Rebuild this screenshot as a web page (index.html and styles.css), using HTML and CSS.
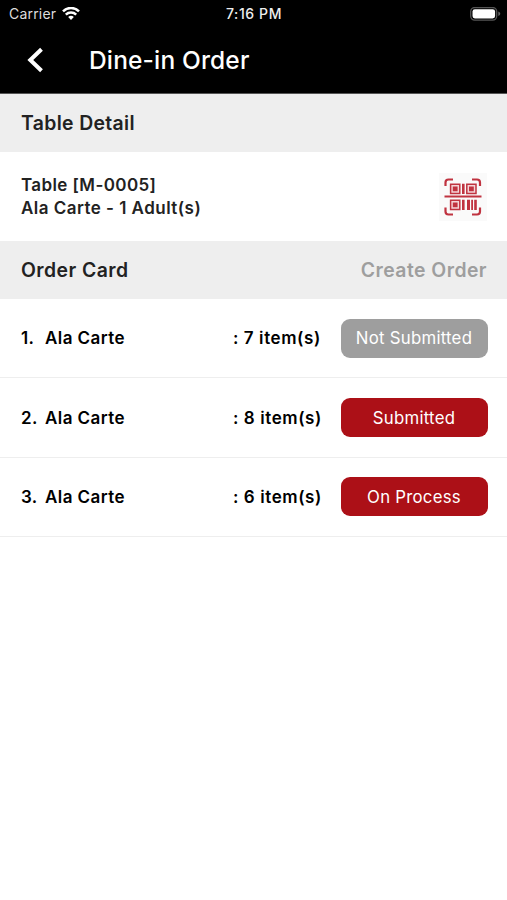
FILE: index.html
```html
<!DOCTYPE html>
<html lang="en">
<head>
<meta charset="utf-8">
<title>Dine-in Order</title>
<link rel="stylesheet" href="styles.css">
</head>
<body>
<header class="top">
  <div class="status">
    <div class="status-left">
      <span class="carrier">Carrier</span>
      <svg class="wifi" width="18" height="14" viewBox="0 0 18 14" fill="none" stroke="#fff" stroke-width="2.5">
        <path d="M1 4.300C5.400-.1 12.600-.1 17 4.300M3.800 7.600c2.900-2.700 7.500-2.700 10.400 0"/>
        <path d="M6.200 9.900c1.600-1.400 4-1.400 5.600 0L9 12.900z" fill="#fff" stroke="none"/>
      </svg>
    </div>
    <span class="time">7:16 PM</span>
    <svg class="battery" width="31" height="14" viewBox="0 0 31 14">
      <rect x=".7" y=".5" width="26" height="12.6" rx="4" fill="none" stroke="#555" stroke-width="1.3"/>
      <rect x="2.5" y="2.2" width="22.600" height="9.200" rx="2.400" fill="#fff"/>
      <path d="M28.300 4.600c2.600.8 2.600 3.600 0 4.400z" fill="#666"/>
    </svg>
  </div>
  <div class="nav">
    <svg class="back" width="16" height="26" viewBox="0 0 16 26" fill="none" stroke="#fff" stroke-width="4"><path d="M14.500 2.300 3.300 13l11.200 10.700"/></svg>
    <h1 class="title">Dine-in Order</h1>
  </div>
</header>
<main>
  <div class="section"><h2 class="heading detail-heading">Table Detail</h2></div>
  <div class="table-info">
    <p class="info"><span class="table-name">Table [M-0005]</span><br><span class="guests">Ala Carte - 1 Adult(s)</span></p>
    <svg class="qr" width="48" height="48" viewBox="0 0 48 48" fill="none" stroke="#c03340">
      <path fill="#fafafa" stroke="none" d="M0 0h48v48H0z"/>
      <path stroke-width="2.200" d="M6.500 13V9.500q0-3 3-3H14M33 6.500h5q3 0 3 3V13M41 34.500v4q0 3-3 3h-5M14 41.500H9.500q-3 0-3-3v-4"/>
      <path stroke-width="2" d="M5.500 23.500h37"/>
      <path fill="#f4d5d8" stroke-width="1.500" d="M11.600 11.300h9.200v9.200h-9.200zM27.800 11.300H37v9.200h-9.200zM11.600 27.300h9.200v9.200h-9.200z"/>
      <path fill="#c03340" stroke="none" d="M13.800 13.500h4.800v4.800h-4.800zM30 13.500h4.800v4.800H30zM13.800 29.500h4.800v4.800h-4.800zM23 10.700h2.600v10.400H23zM23 26.700h2.600v10.400H23zM28 26.700h3v10.400h-3zM32.200 26.700h1.800v10.400h-1.800zM35.200 26.700h2.600v10.400h-2.600z"/>
    </svg>
  </div>
  <div class="section"><h2 class="heading card-heading">Order Card</h2><span class="heading create">Create Order</span></div>
  <ul class="orders">
    <li class="order"><span class="num">1.</span><span class="name">Ala Carte</span><span class="items">: 7 item(s)</span><span class="state pending">Not Submitted</span></li>
    <li class="order"><span class="num">2.</span><span class="name">Ala Carte</span><span class="items">: 8 item(s)</span><span class="state">Submitted</span></li>
    <li class="order"><span class="num">3.</span><span class="name">Ala Carte</span><span class="items">: 6 item(s)</span><span class="state">On Process</span></li>
  </ul>
</main>
</body>
</html>
```
FILE: styles.css
```css
* { box-sizing: border-box; }
body { margin: 0; background: #fff; color: #000; font-family: Inter, "Liberation Sans", sans-serif; }
h1, h2, p, ul { margin: 0; padding: 0; }
svg { display: block; flex: none; }
.top { height: 94px; background: #000; color: #fff; border-bottom: 1px solid #555; }
.status { height: 27px; display: grid; grid-template-columns: 1fr auto 1fr; align-items: center; padding: 0 6px 0 9px; }
.status-left { display: flex; align-items: center; gap: 6px; }
.carrier { font-size: 14px; color: #ddd; letter-spacing: .2px; }
.time { font-size: 14px; font-weight: 550; color: #eee; letter-spacing: .6px; margin-right: 2px; }
.battery { justify-self: end; }
.nav { height: 65px; display: flex; align-items: center; padding-left: 27px; }
.title { margin-left: 46px; font-size: 24.5px; font-weight: 470; letter-spacing: .15px; }
.section { height: 58px; display: flex; align-items: center; justify-content: space-between; padding: 0 20px 0 21px; background: #eee; }
.heading { font-size: 19.4px; font-weight: 600; color: #222; letter-spacing: .35px; }
.card-heading { letter-spacing: .45px; }
.create { color: #9e9e9e; letter-spacing: .45px; }
.table-info { height: 89px; display: flex; align-items: center; justify-content: space-between; padding: 0 20px 0 21px; }
.info { font-size: 17px; line-height: 23px; font-weight: 600; color: #222; letter-spacing: .38px; }
.guests { letter-spacing: .47px; }
.orders { list-style: none; }
.order { height: 79.4px; display: flex; align-items: center; padding: 0 19.5px 0 21px; border-bottom: 1px solid #eee; font-size: 17px; font-weight: 600; letter-spacing: .42px; }
.num { width: 24px; }
.name { width: 188px; }
.items { width: 107.5px; white-space: nowrap; letter-spacing: .58px; }
.state { flex: 1; height: 39px; display: flex; align-items: center; justify-content: center; border-radius: 9px; background: #ac1017; color: #fff; font-size: 16.8px; font-weight: 400; letter-spacing: .25px; }
.pending { background: #9e9e9e; }
```
